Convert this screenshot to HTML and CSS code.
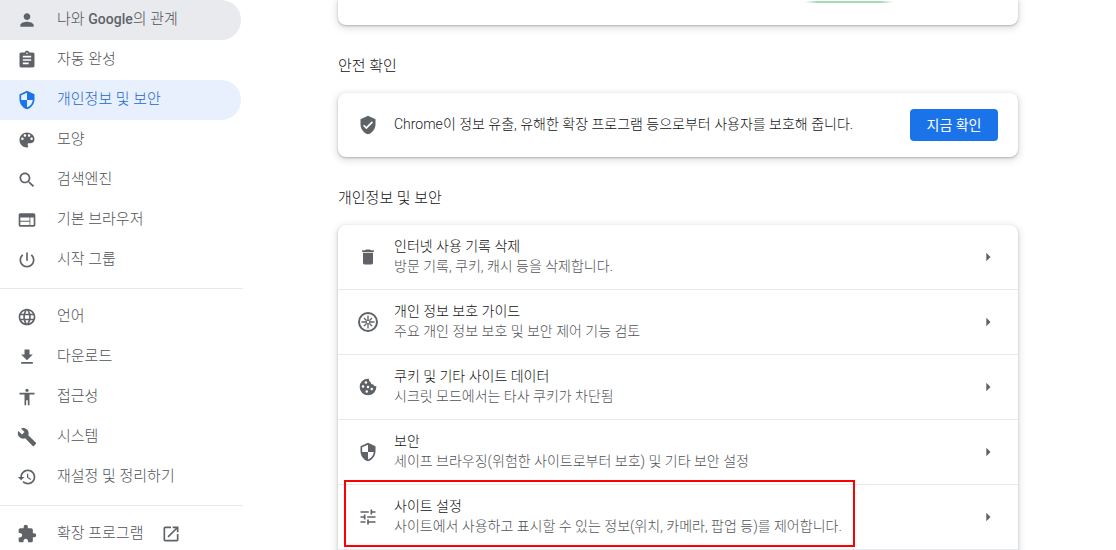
FILE: index.html
```
<!DOCTYPE html>
<html lang="ko">
<head>
    <meta charset="UTF-8">
    <meta name="viewport" content="width=device-width, initial-scale=1.0">
    <title>설정 - 개인정보 및 보안</title>
    <link rel="stylesheet" href="styles.css">
</head>
<body>
    <nav class="sidebar">
        <a href="#people" class="item hover">
            <svg class="icon" viewBox="0 0 24 24"><path d="M12 12c2.21 0 4-1.79 4-4s-1.79-4-4-4-4 1.79-4 4 1.79 4 4 4zm0 2c-2.67 0-8 1.34-8 4v2h16v-2c0-2.66-5.33-4-8-4z"/></svg>
            <span>나와 <b>Google</b>의 관계</span>
        </a>
        <a href="#autofill" class="item">
            <svg class="icon" viewBox="0 0 24 24"><path d="M19 3h-4.18C14.4 1.84 13.3 1 12 1c-1.3 0-2.4.84-2.82 2H5c-1.1 0-2 .9-2 2v14c0 1.1.9 2 2 2h14c1.1 0 2-.9 2-2V5c0-1.1-.9-2-2-2zm-7 0c.55 0 1 .45 1 1s-.45 1-1 1-1-.45-1-1 .45-1 1-1zm2 14H7v-2h7v2zm3-4H7v-2h10v2zm0-4H7V7h10v2z"/></svg>
            <span>자동 완성</span>
        </a>
        <a href="#privacy" class="item selected">
            <svg class="icon" viewBox="0 0 24 24"><path d="M12 1L3 5v6c0 5.55 3.84 10.74 9 12 5.16-1.26 9-6.45 9-12V5l-9-4zm0 10.99h7c-.53 4.12-3.28 7.79-7 8.94V12H5V6.3l7-3.11v8.8z"/></svg>
            <span>개인정보 및 보안</span>
        </a>
        <a href="#appearance" class="item">
            <svg class="icon" viewBox="0 0 24 24"><path d="M12 3c-4.97 0-9 4.03-9 9s4.03 9 9 9c.83 0 1.5-.67 1.5-1.5 0-.39-.15-.74-.39-1.01-.23-.26-.38-.61-.38-.99 0-.83.67-1.5 1.5-1.5H16c2.76 0 5-2.24 5-5 0-4.42-4.03-8-9-8zm-5.5 9c-.83 0-1.5-.67-1.5-1.5S5.67 9 6.5 9 8 9.67 8 10.5 7.33 12 6.5 12zm3-4C8.67 8 8 7.33 8 6.5S8.67 5 9.5 5s1.5.67 1.5 1.5S10.33 8 9.5 8zm5 0c-.83 0-1.5-.67-1.5-1.5S13.67 5 14.5 5s1.5.67 1.5 1.5S15.33 8 14.5 8zm3 4c-.83 0-1.5-.67-1.5-1.5S16.67 9 17.5 9s1.5.67 1.5 1.5-.67 1.5-1.5 1.5z"/></svg>
            <span>모양</span>
        </a>
        <a href="#search" class="item">
            <svg class="icon" viewBox="0 0 24 24"><path d="M15.5 14h-.79l-.28-.27C15.41 12.59 16 11.11 16 9.5 16 5.91 13.09 3 9.5 3S3 5.91 3 9.5 5.91 16 9.5 16c1.61 0 3.09-.59 4.23-1.57l.27.28v.79l5 4.99L20.49 19l-4.99-5zm-6 0C7.01 14 5 11.99 5 9.5S7.01 5 9.5 5 14 7.01 14 9.5 11.99 14 9.5 14z"/></svg>
            <span>검색엔진</span>
        </a>
        <a href="#browser" class="item">
            <svg class="icon" viewBox="0 0 24 24"><path d="M20 4H4c-1.1 0-1.99.9-1.99 2L2 18c0 1.1.9 2 2 2h16c1.1 0 2-.9 2-2V6c0-1.1-.9-2-2-2zm-5 14H4v-4h11v4zm0-5H4V9h11v4zm5 5h-4V9h4v9z"/></svg>
            <span>기본 브라우저</span>
        </a>
        <a href="#startup" class="item">
            <svg class="icon" viewBox="0 0 24 24"><path d="M13 3h-2v10h2V3zm4.83 2.17l-1.42 1.42C17.99 7.86 19 9.81 19 12c0 3.87-3.13 7-7 7s-7-3.13-7-7c0-2.19 1.01-4.14 2.58-5.42L6.17 5.17C4.23 6.82 3 9.26 3 12c0 4.97 4.03 9 9 9s9-4.03 9-9c0-2.74-1.23-5.18-3.17-6.83z"/></svg>
            <span>시작 그룹</span>
        </a>
        <hr>
        <a href="#languages" class="item">
            <svg class="icon" viewBox="0 0 24 24"><path d="M11.99 2C6.47 2 2 6.48 2 12s4.47 10 9.99 10C17.52 22 22 17.52 22 12S17.52 2 11.99 2zm6.93 6h-2.95c-.32-1.25-.78-2.45-1.38-3.56 1.84.63 3.37 1.91 4.33 3.56zM12 4.04c.83 1.2 1.48 2.53 1.91 3.96h-3.82c.43-1.43 1.08-2.76 1.91-3.96zM4.26 14C4.1 13.36 4 12.69 4 12s.1-1.36.26-2h3.38c-.08.66-.14 1.32-.14 2s.06 1.34.14 2H4.26zm.82 2h2.95c.32 1.25.78 2.45 1.38 3.56-1.84-.63-3.37-1.9-4.33-3.56zm2.95-8H5.08c.96-1.66 2.49-2.93 4.33-3.56C8.81 5.55 8.35 6.75 8.03 8zM12 19.96c-.83-1.2-1.48-2.53-1.91-3.96h3.82c-.43 1.43-1.08 2.76-1.91 3.96zM14.34 14H9.66c-.09-.66-.16-1.32-.16-2s.07-1.35.16-2h4.68c.09.65.16 1.32.16 2s-.07 1.34-.16 2zm.25 5.56c.6-1.11 1.06-2.31 1.38-3.56h2.95c-.96 1.65-2.49 2.93-4.33 3.56zM16.36 14c.08-.66.14-1.32.14-2s-.06-1.34-.14-2h3.38c.16.64.26 1.31.26 2s-.1 1.36-.26 2h-3.38z"/></svg>
            <span>언어</span>
        </a>
        <a href="#downloads" class="item">
            <svg class="icon" viewBox="0 0 24 24"><path d="M19 9h-4V3H9v6H5l7 7 7-7zM5 18v2h14v-2H5z"/></svg>
            <span>다운로드</span>
        </a>
        <a href="#accessibility" class="item">
            <svg class="icon" viewBox="0 0 24 24"><path d="M12 2c1.1 0 2 .9 2 2s-.9 2-2 2-2-.9-2-2 .9-2 2-2zm9 7h-6v13h-2v-6h-2v6H9V9H3V7h18v2z"/></svg>
            <span>접근성</span>
        </a>
        <a href="#system" class="item">
            <svg class="icon" viewBox="0 0 24 24"><path d="M22.7 19l-9.1-9.1c.9-2.3.4-5-1.5-6.9-2-2-5-2.4-7.4-1.3L9 6 6 9 1.6 4.7C.4 7.1.9 10.1 2.9 12.1c1.9 1.9 4.6 2.4 6.9 1.5l9.1 9.1c.4.4 1 .4 1.4 0l2.3-2.3c.5-.4.5-1.1.1-1.4z"/></svg>
            <span>시스템</span>
        </a>
        <a href="#reset" class="item">
            <svg class="icon" viewBox="0 0 24 24"><path d="M13 3c-4.97 0-9 4.03-9 9H1l3.89 3.89.07.14L9 12H6c0-3.87 3.13-7 7-7s7 3.13 7 7-3.13 7-7 7c-1.93 0-3.68-.79-4.94-2.06l-1.42 1.42C8.27 19.99 10.51 21 13 21c4.97 0 9-4.03 9-9s-4.03-9-9-9zm-1 5v5l4.28 2.54.72-1.21-3.5-2.08V8H12z"/></svg>
            <span>재설정 및 정리하기</span>
        </a>
        <hr>
        <a href="#extensions" class="item">
            <svg class="icon" viewBox="0 0 24 24"><path d="M20.5 11H19V7c0-1.1-.9-2-2-2h-4V3.5C13 2.12 11.88 1 10.5 1S8 2.12 8 3.5V5H4c-1.1 0-1.99.9-1.99 2v3.8H3.5c1.49 0 2.7 1.21 2.7 2.7s-1.21 2.7-2.7 2.7H2V20c0 1.1.9 2 2 2h3.8v-1.5c0-1.49 1.21-2.7 2.7-2.7 1.49 0 2.7 1.21 2.7 2.7V22H17c1.1 0 2-.9 2-2v-4h1.5c1.38 0 2.5-1.12 2.5-2.5S21.88 11 20.5 11z"/></svg>
            <span>확장 프로그램</span>
            <svg class="icon launch" viewBox="0 0 24 24"><path d="M19 19H5V5h7V3H5c-1.11 0-2 .9-2 2v14c0 1.1.89 2 2 2h14c1.1 0 2-.9 2-2v-7h-2v7zM14 3v2h3.59l-9.83 9.83 1.41 1.41L19 6.41V10h2V3h-7z"/></svg>
        </a>
    </nav>

    <main class="content">
        <div class="column">
            <div class="card card-top">
                <div class="green-line"></div>
            </div>

            <h2>안전 확인</h2>
            <div class="card check">
                <svg class="icon" viewBox="0 0 24 24"><path d="M12 1L3 5v6c0 5.55 3.84 10.74 9 12 5.16-1.26 9-6.45 9-12V5l-9-4zm-2 16l-4-4 1.41-1.41L10 14.17l6.59-6.59L18 9l-8 8z"/></svg>
                <span class="text"><span class="latin">Chrome</span>이 정보 유출, 유해한 확장 프로그램 등으로부터 사용자를 보호해 줍니다.</span>
                <button type="button">지금 확인</button>
            </div>

            <h2>개인정보 및 보안</h2>
            <div class="card">
                <a href="#clear" class="row">
                    <svg class="icon" viewBox="0 0 24 24"><path d="M6 19c0 1.1.9 2 2 2h8c1.1 0 2-.9 2-2V7H6v12zM19 4h-3.5l-1-1h-5l-1 1H5v2h14V4z"/></svg>
                    <span class="text">인터넷 사용 기록 삭제<small>방문 기록, 쿠키, 캐시 등을 삭제합니다.</small></span>
                    <svg class="icon" viewBox="0 0 24 24"><path d="M10 7l5 5-5 5z"/></svg>
                </a>
                <a href="#guide" class="row">
                    <svg class="icon" viewBox="0 0 20 20">
                        <circle cx="10" cy="10" r="9" fill="none" stroke="currentColor" stroke-width="2"/>
                        <path d="M10 3.5v4.500M10 12v4.500M3.500 10H8M12 10h4.500M6 6l2.500 2.500M11.500 11.500L14 14M14 6l-2.500 2.500M8.500 11.500L6 14" fill="none" stroke="currentColor" stroke-width="1.300"/>
                        <circle cx="10" cy="10" r="1.800" fill="none" stroke="currentColor"/>
                    </svg>
                    <span class="text">개인 정보 보호 가이드<small>주요 개인 정보 보호 및 보안 제어 기능 검토</small></span>
                    <svg class="icon" viewBox="0 0 24 24"><path d="M10 7l5 5-5 5z"/></svg>
                </a>
                <a href="#cookies" class="row">
                    <svg class="icon" viewBox="0 0 24 24">
                        <path d="M12 2a10 10 0 1 0 10 10c0-.5 0-.8-.1-1.200-1.500.6-3.100-.3-3.400-1.900-2 .2-3.500-1.200-3.300-3-1.600-.3-2.500-2-2-3.800C12.800 2 12.400 2 12 2z"/>
                        <g fill="#fff"><circle cx="9.5" cy="6.5" r="1.5"/><circle cx="6" cy="11.5" r="1.5"/><circle cx="12" cy="12" r="1.5"/><circle cx="10.5" cy="17.5" r="1.5"/><circle cx="16.5" cy="14.5" r="1.5"/></g>
                    </svg>
                    <span class="text">쿠키 및 기타 사이트 데이터<small>시크릿 모드에서는 타사 쿠키가 차단됨</small></span>
                    <svg class="icon" viewBox="0 0 24 24"><path d="M10 7l5 5-5 5z"/></svg>
                </a>
                <a href="#security" class="row">
                    <svg class="icon" viewBox="0 0 24 24"><path d="M12 1L3 5v6c0 5.55 3.84 10.74 9 12 5.16-1.26 9-6.45 9-12V5l-9-4zm0 10.99h7c-.53 4.12-3.28 7.79-7 8.94V12H5V6.3l7-3.11v8.8z"/></svg>
                    <span class="text">보안<small>세이프 브라우징(위험한 사이트로부터 보호) 및 기타 보안 설정</small></span>
                    <svg class="icon" viewBox="0 0 24 24"><path d="M10 7l5 5-5 5z"/></svg>
                </a>
                <a href="#site" class="row marked">
                    <svg class="icon" viewBox="0 0 24 24"><path d="M3 17v2h6v-2H3zM3 5v2h10V5H3zm10 16v-2h8v-2h-8v-2h-2v6h2zM7 9v2H3v2h4v2h2V9H7zm14 4v-2H11v2h10zm-6-4h2V7h4V5h-4V3h-2v6z"/></svg>
                    <span class="text">사이트 설정<small>사이트에서 사용하고 표시할 수 있는 정보(위치, 카메라, 팝업 등)를 제어합니다.</small></span>
                    <svg class="icon" viewBox="0 0 24 24"><path d="M10 7l5 5-5 5z"/></svg>
                </a>
                <div class="row"></div>
            </div>
        </div>
    </main>
</body>
</html>
```
FILE: styles.css
```
*, *::after { box-sizing: border-box; }
body { display: flex; height: 100vh; margin: 0; overflow: hidden; background: #fff; color: #111214; font: 300 14px/20px Roboto, "Noto Sans CJK KR", sans-serif; }
a { color: inherit; text-decoration: none; }
.icon { flex: none; width: 20px; height: 20px; fill: currentColor; color: #5f6368; }

.sidebar { flex: none; width: 244px; }
.sidebar hr { height: 1px; margin: 8px 1px 8px 0; border: 0; background: #e8eaed; }
.item { display: flex; align-items: center; gap: 20px; height: 40px; margin-right: 3px; padding-left: 17px; border-radius: 0 20px 20px 0; color: #505357; font-size: 15px; }
.item span { padding-bottom: 2px; }
.item b { color: #5f6368; font-size: 14px; font-weight: 500; }
.hover { background: #e8eaed; }
.selected { background: #e8f0fe; color: #1967d2; }
.selected .icon { color: #1a73e8; }
.launch { margin-left: -2px; }

.content { flex: 1; min-width: 0; padding: 0 24px 0 20px; }
.column { max-width: 680px; margin: 0 auto; }
h2 { margin: 0; padding: 31px 0 17px; font-size: 15px; font-weight: 300; line-height: 20px; }
.card { border-radius: 8px; background: #fff; box-shadow: 0 1px 2px rgba(60, 64, 67, .3), 0 2px 6px 2px rgba(60, 64, 67, .15); }
.card-top { display: flex; justify-content: flex-end; padding: 1px 125px 22px 0; border-radius: 0 0 8px 8px; }
.green-line { width: 88px; height: 2px; background: linear-gradient(90deg, transparent, #a8dab5 12px, #a8dab5 76px, transparent); }
.check, .row { display: flex; align-items: center; padding: 11px 20px; }
.check { height: 64px; }
.text { flex: 1; min-width: 0; padding: 0 0 2px 16px; }
.text small { display: block; color: #505357; font-size: 14px; }
.latin { color: #202124; font-size: 14px; }
button { min-width: 88px; height: 32px; padding: 0 16px 2px; border: 0; border-radius: 4px; background: #1a73e8; color: #fff; font: 400 14px Roboto, "Noto Sans CJK KR", sans-serif; cursor: pointer; }
.row + .row { border-top: 1px solid #e8eaed; }

/* red frame over the highlighted row */
.marked { position: relative; }
.marked::after { content: ""; position: absolute; top: -5px; left: 6px; width: 511px; height: 67px; border: 2px solid #f00; }
```
